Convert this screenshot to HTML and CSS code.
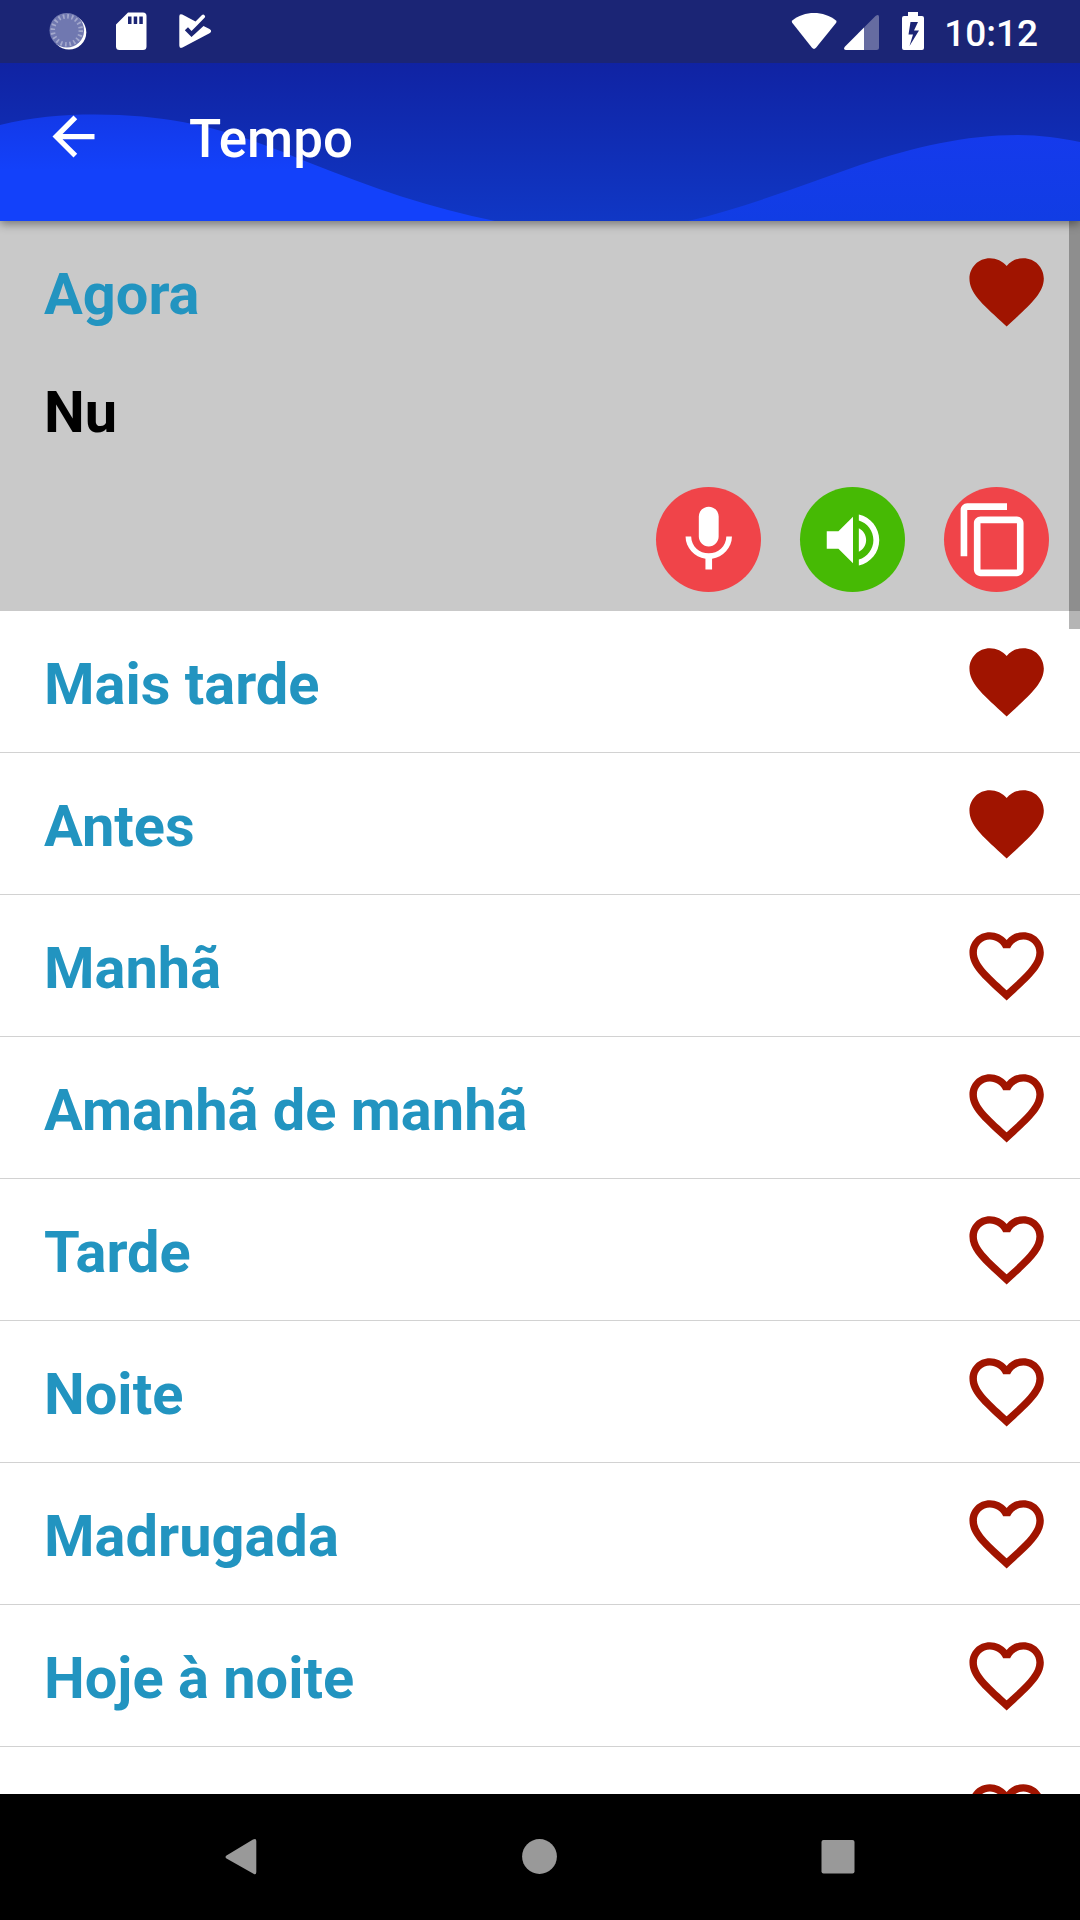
FILE: index.html
```html
<!DOCTYPE html>
<html lang="pt">
<head>
<meta charset="utf-8">
<title>Tempo</title>
<link rel="stylesheet" href="styles.css">
</head>
<body>
<svg class="defs" width="0" height="0" aria-hidden="true">
  <symbol id="heart-full" viewBox="0 0 24 24"><path d="M12 21.35l-1.45-1.32C5.4 15.36 2 12.28 2 8.5 2 5.42 4.42 3 7.5 3c1.74 0 3.41.81 4.5 2.09C13.09 3.81 14.76 3 16.5 3 19.58 3 22 5.42 22 8.5c0 3.78-3.4 6.86-8.55 11.54L12 21.35z"/></symbol>
  <symbol id="heart-line" viewBox="0 0 24 24"><path d="M16.5 3c-1.74 0-3.41.81-4.5 2.09C10.91 3.81 9.24 3 7.5 3 4.42 3 2 5.42 2 8.5c0 3.78 3.4 6.86 8.55 11.54L12 21.35l1.45-1.32C18.6 15.36 22 12.28 22 8.5 22 5.42 19.58 3 16.5 3zm-4.4 15.55l-.1.1-.1-.1C7.14 14.24 4 11.39 4 8.5 4 6.5 5.5 5 7.5 5c1.54 0 3.04.99 3.57 2.36h1.87C13.46 5.99 14.96 5 16.5 5c2 0 3.5 1.5 3.5 3.5 0 2.89-3.14 5.74-7.9 10.05z"/></symbol>
</svg>
<div class="screen">
  <header class="top">
    <svg class="waves" viewBox="0 0 1080 221">
      <defs>
        <linearGradient id="sky" gradientUnits="userSpaceOnUse" x1="0" y1="63" x2="0" y2="221"><stop offset="0" stop-color="#1023a3"/><stop offset="1" stop-color="#1037c5"/></linearGradient>
        <linearGradient id="waveL" gradientUnits="userSpaceOnUse" x1="0" y1="114" x2="0" y2="170"><stop offset="0" stop-color="#1339e8"/><stop offset="1" stop-color="#1341fa"/></linearGradient>
        <linearGradient id="waveR" gradientUnits="userSpaceOnUse" x1="0" y1="135" x2="0" y2="221"><stop offset="0" stop-color="#153aec"/><stop offset="1" stop-color="#113de4"/></linearGradient>
      </defs>
      <rect width="1080" height="221" fill="url(#sky)"/>
      <path fill="url(#waveL)" d="M0 125C32 117 62 114.500 95 114.500C190 114.500 250 138 310 163C370 187 430 208 495 221H0z"/>
      <path fill="url(#waveR)" d="M688 221C745 208 805 184 860 165C915 147 965 135 1018 135C1040 135 1060 138 1080 142V221z"/>
    </svg>
    <div class="status">
      <svg class="status-icons" viewBox="0 0 220 63">
        <circle cx="69" cy="32.300" r="17.300" fill="#fff"/>
        <circle cx="66.800" cy="30.300" r="17.300" fill="#7078b0"/>
        <circle cx="66.800" cy="30.300" r="14" fill="none" stroke="#a3a8cc" stroke-width="4.500" stroke-dasharray="1.700 2.698"/>
        <path fill="#fff" fill-rule="evenodd" d="M128 12.500H143a3.500 3.500 0 0 1 3.500 3.500V46.500a3.500 3.500 0 0 1-3.500 3.500H119.500a3.500 3.500 0 0 1-3.500-3.500V24.500zM128 16.500v7.500h3.500v-7.500zM133.700 16.500v7.500h3.500v-7.500zM139.300 16.500v7.500h3.500v-7.500z"/>
        <path fill="#fff" d="M179.300 16.500q0-3.400 3-1.900L195.500 21.500L202 15q1.300-1 2.500.2t.3 2.400L197 25.500L191.500 31L188 27.300L184.800 30.300L191.500 37L203.500 26L209.500 29Q212.800 31 209.500 33.300L182.500 47.500q-3.200 1.500-3.200-2z"/>
      </svg>
      <div class="status-right">
        <svg class="status-signal" viewBox="784 0 150 63">
          <path fill="#fff" d="M792.300 20.500C804 10.500 824 10.500 836 20.500Q837 21.600 836.200 22.800L816 47.800Q814 50 812 47.800L792.200 22.800Q791.300 21.600 792.300 20.500z"/>
          <path fill="#666ca1" d="M864 27.500L875.500 16Q879 13.500 879 17V47.500Q879 50 876.500 50H864z"/>
          <path fill="#fff" d="M864 27.500V50H846Q843 49.500 844.600 46.900z"/>
          <path fill="#fff" fill-rule="evenodd" d="M908 12h10v4h4q2 0 2 2v30q0 2-2 2h-18q-2 0-2-2V18q0-2 2-2h4zM910.500 22L908.500 34.500H913L909.500 46L919 30.500H914L918 22z"/>
        </svg>
        <span class="clock">10:12</span>
      </div>
    </div>
    <div class="toolbar">
      <svg class="back" viewBox="0 0 24 24"><path d="M20 11H7.830l5.590-5.590L12 4l-8 8 8 8 1.410-1.410L7.830 13H20v-2z"/></svg>
      <h1 class="title">Tempo</h1>
    </div>
  </header>
  <main class="list">
    <div class="scrollbar"></div>
    <section class="open">
      <div class="row"><span class="phrase">Agora</span><svg class="heart"><use href="#heart-full"/></svg></div>
      <p class="translation">Nu</p>
      <div class="actions">
        <button class="round red"><svg class="mic" viewBox="0 0 24 24"><path d="M12 14c1.660 0 2.990-1.340 2.990-3L15 5c0-1.660-1.340-3-3-3S9 3.340 9 5v6c0 1.660 1.340 3 3 3zm5.300-3c0 3-2.540 5.100-5.300 5.100S6.700 14 6.700 11H5c0 3.410 2.720 6.230 6 6.720V21h2v-3.280c3.280-.48 6-3.300 6-6.720h-1.700z"/></svg></button>
        <button class="round green"><svg class="speaker" viewBox="0 0 24 24"><path d="M3 9v6h4l5 5V4L7 9H3zm13.500 3c0-1.770-1.020-3.290-2.500-4.030v8.050c1.480-.73 2.500-2.250 2.500-4.020zM14 3.230v2.060c2.890.86 5 3.540 5 6.710s-2.110 5.850-5 6.710v2.060c4.010-.91 7-4.490 7-8.770s-2.990-7.860-7-8.770z"/></svg></button>
        <button class="round red"><svg class="copy" viewBox="0 0 24 24"><path d="M16 1H4c-1.100 0-2 .9-2 2v14h2V3h12V1zm3 4H8c-1.100 0-2 .9-2 2v14c0 1.100.9 2 2 2h11c1.100 0 2-.9 2-2V7c0-1.100-.9-2-2-2zm0 16H8V7h11v14z"/></svg></button>
      </div>
    </section>
    <div class="row line"><span class="phrase">Mais tarde</span><svg class="heart"><use href="#heart-full"/></svg></div>
    <div class="row line"><span class="phrase">Antes</span><svg class="heart"><use href="#heart-full"/></svg></div>
    <div class="row line"><span class="phrase">Manhã</span><svg class="heart"><use href="#heart-line"/></svg></div>
    <div class="row line"><span class="phrase">Amanhã de manhã</span><svg class="heart"><use href="#heart-line"/></svg></div>
    <div class="row line"><span class="phrase">Tarde</span><svg class="heart"><use href="#heart-line"/></svg></div>
    <div class="row line"><span class="phrase">Noite</span><svg class="heart"><use href="#heart-line"/></svg></div>
    <div class="row line"><span class="phrase">Madrugada</span><svg class="heart"><use href="#heart-line"/></svg></div>
    <div class="row line"><span class="phrase">Hoje à noite</span><svg class="heart"><use href="#heart-line"/></svg></div>
    <div class="row line"><span class="phrase"></span><svg class="heart"><use href="#heart-line"/></svg></div>
  </main>
  <nav class="navbar">
    <svg class="nav-icon" viewBox="0 0 40 40"><path d="M4.500 18.500L31 2.600Q34.300 .8 34.300 4V35Q34.300 38.500 31.500 36.800L4.500 21.600Q2.500 20 4.500 18.500z"/></svg>
    <svg class="nav-icon" viewBox="0 0 40 40"><circle cx="19.500" cy="19.500" r="17.400"/></svg>
    <svg class="nav-icon" viewBox="0 0 40 40"><rect x="3.500" y="3" width="33" height="33.500" rx="2"/></svg>
  </nav>
</div>
</body>
</html>
```

FILE: styles.css
```css
* { box-sizing: border-box; }
body { margin: 0; font-family: Roboto, "Liberation Sans", sans-serif; background: #fff; }
.defs { position: absolute; }
.screen { width: 1080px; height: 1920px; display: flex; flex-direction: column; overflow: hidden; }

.top { position: relative; z-index: 2; flex: 0 0 221px; display: flex; flex-direction: column; box-shadow: 0 3px 9px rgba(0, 0, 0, .42); }
.waves { position: absolute; inset: 0; width: 1080px; height: 221px; }
.status { position: relative; height: 63px; display: flex; justify-content: space-between; background: #1b2575; }
.status-icons { width: 220px; height: 63px; }
.status-right { display: flex; align-items: center; gap: 10px; padding-right: 42px; }
.status-signal { width: 150px; height: 63px; }
.clock { color: #fff; font-size: 37px; font-weight: 500; line-height: 43px; padding-top: 4px; }
.toolbar { position: relative; flex: 1; display: flex; align-items: center; gap: 84px; padding: 0 42px 12px; }
.back { width: 63px; height: 63px; fill: #fff; }
.title { margin: 0; padding-top: 5px; color: #fff; font-size: 52.900px; line-height: 62px; font-weight: 500; }

.list { position: relative; flex: 1; overflow: hidden; }
.scrollbar { position: absolute; z-index: 1; top: 0; right: 0; width: 11px; height: 408px; background: rgba(0, 0, 0, .29); }
.row { height: 141px; display: flex; align-items: center; justify-content: space-between; padding: 0 28.500px 0 44px; }
.line { height: 142px; border-bottom: 1px solid #d2d2d2; }
.phrase { color: #2294c0; font-size: 57.750px; line-height: 68px; font-weight: 700; padding-top: 4px; }
.heart { width: 89.250px; height: 89.250px; fill: #a01400; }
.open { height: 390px; background: #c9c9c9; }
.translation { margin: 0; padding: 16px 44px 0; color: #000; font-size: 57.750px; line-height: 68px; font-weight: 700; }
.actions { display: flex; justify-content: flex-end; gap: 39px; padding: 41px 31px 0; }
.round { width: 105px; height: 105px; border: 0; padding: 0; border-radius: 50%; display: flex; align-items: center; justify-content: center; }
.round svg { fill: #fff; }
.red { background: #f04449; }
.green { background: #46ba04; }
.mic { width: 79.500px; height: 79.500px; }
.speaker { width: 70px; height: 70px; }
.copy { width: 79.500px; height: 79.500px; margin-right: 5px; }

.navbar { flex: 0 0 126px; display: flex; justify-content: space-between; align-items: center; padding: 0 222px; background: #000; }
.nav-icon { width: 40px; height: 40px; fill: #999; }
```
